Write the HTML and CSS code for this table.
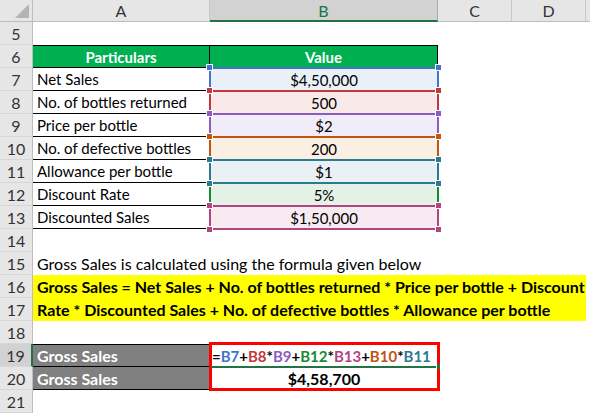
FILE: index.html
```html
<!DOCTYPE html>
<html>
<head>
<meta charset="utf-8">
<link rel="stylesheet" href="styles.css">
</head>
<body>
<div class="sheet">
  <div class="row head">
    <div class="corner"><span class="tri"></span></div>
    <div class="ch">A</div>
    <div class="ch sel">B</div>
    <div class="ch">C</div>
    <div class="ch">D</div>
    <div class="ch last"></div>
  </div>

  <div class="row"><div class="rh">5</div><div class="c"></div></div>

  <div class="row">
    <div class="rh">6</div>
    <div class="c th tha">Particulars</div>
    <div class="c th thb">Value</div>
  </div>

  <div class="row">
    <div class="rh">7</div>
    <div class="c la">Net Sales</div>
    <div class="c val r7"><span class="ref"><i class="h tl"></i><i class="h tr"></i><i class="h bl"></i><i class="h br"></i></span>$4,50,000</div>
  </div>
  <div class="row">
    <div class="rh">8</div>
    <div class="c la">No. of bottles returned</div>
    <div class="c val r8"><span class="ref"><i class="h tl"></i><i class="h tr"></i><i class="h bl"></i><i class="h br"></i></span>500</div>
  </div>
  <div class="row">
    <div class="rh">9</div>
    <div class="c la">Price per bottle</div>
    <div class="c val r9"><span class="ref"><i class="h tl"></i><i class="h tr"></i><i class="h bl"></i><i class="h br"></i></span>$2</div>
  </div>
  <div class="row">
    <div class="rh">10</div>
    <div class="c la">No. of defective bottles</div>
    <div class="c val r10"><span class="ref"><i class="h tl"></i><i class="h tr"></i><i class="h bl"></i><i class="h br"></i></span>200</div>
  </div>
  <div class="row">
    <div class="rh">11</div>
    <div class="c la">Allowance per bottle</div>
    <div class="c val r11"><span class="ref"><i class="h tl"></i><i class="h tr"></i><i class="h bl"></i><i class="h br"></i></span>$1</div>
  </div>
  <div class="row">
    <div class="rh">12</div>
    <div class="c la">Discount Rate</div>
    <div class="c val r12"><span class="ref"><i class="h tl"></i><i class="h tr"></i><i class="h bl"></i><i class="h br"></i></span>5%</div>
  </div>
  <div class="row">
    <div class="rh">13</div>
    <div class="c la">Discounted Sales</div>
    <div class="c val r13"><span class="ref"><i class="h tl"></i><i class="h tr"></i><i class="h bl"></i><i class="h br"></i></span>$1,50,000</div>
  </div>

  <div class="row"><div class="rh">14</div><div class="c"></div></div>

  <div class="row">
    <div class="rh">15</div>
    <div class="c big">Gross Sales is calculated using the formula given below</div>
  </div>
  <div class="row">
    <div class="rh">16</div>
    <div class="c hl">Gross Sales = Net Sales + No. of bottles returned * Price per bottle + Discount</div>
  </div>
  <div class="row">
    <div class="rh">17</div>
    <div class="c hl">Rate * Discounted Sales + No. of defective bottles * Allowance per bottle</div>
  </div>

  <div class="row"><div class="rh">18</div><div class="c"></div></div>

  <div class="row">
    <div class="rh rsel">19</div>
    <div class="c gs gs1">Gross Sales</div>
    <div class="c fx"><span class="redbox"></span><span class="active"><i class="ah"></i></span>=<b class="k7">B7</b>+<b class="k8">B8</b>*<b class="k9">B9</b>+<b class="k12">B12</b>*<b class="k13">B13</b>+<b class="k10">B10</b>*<b class="k11">B11</b></div>
  </div>
  <div class="row">
    <div class="rh">20</div>
    <div class="c gs gs2">Gross Sales</div>
    <div class="c res">$4,58,700</div>
  </div>

  <div class="row"><div class="rh">21</div><div class="c"></div></div>
</div>
</body>
</html>
```

FILE: styles.css
```css
html, body {
  margin: 0;
  padding: 0;
  background: #fff;
}
body {
  width: 590px;
  height: 413px;
  overflow: hidden;
  font-family: Lato, "Open Sans", sans-serif;
  font-size: 15px;
  color: #000;
}
.sheet {
  display: flex;
  flex-direction: column;
}
.row {
  display: grid;
  grid-template-columns: 33px 177px 228px 74px 74px 4px;
  height: 23px;
}
.row.head {
  height: 22px;
}
.corner {
  position: relative;
  background: #e6e6e6;
  border-right: 1px solid #bdbdbd;
  border-bottom: 1px solid #bdbdbd;
  box-sizing: border-box;
}
.tri {
  position: absolute;
  right: 3px;
  bottom: 3px;
  width: 0;
  height: 0;
  border-left: 14px solid transparent;
  border-bottom: 14px solid #b4b4b4;
}
.ch {
  background: #e6e6e6;
  border-right: 1px solid #c8c8c8;
  border-bottom: 1px solid #bdbdbd;
  box-sizing: border-box;
  display: flex;
  align-items: center;
  justify-content: center;
  color: #333;
  font-size: 16px;
}
.ch.sel {
  background: #d2d2d2;
  color: #217346;
  border-bottom: 2px solid #217346;
  border-right: 1px solid #a9a9a9;
}
.ch.last {
  border-right: none;
}
.rh {
  background: #e6e6e6;
  border-right: 1px solid #bdbdbd;
  border-bottom: 1px solid #d6d6d6;
  box-sizing: border-box;
  display: flex;
  align-items: center;
  justify-content: center;
  color: #333;
  font-size: 16px;
}
.rh.rsel {
  background: #d2d2d2;
  border-right: 2px solid #217346;
}
.c {
  box-sizing: border-box;
  display: flex;
  align-items: center;
  padding: 0 4px;
  white-space: nowrap;
  position: relative;
}
.big {
  font-size: 16px;
}
.th {
  background: #00b050;
  color: #fff;
  font-weight: bold;
  justify-content: center;
  border-top: 1px solid #000;
  border-bottom: 1px solid #000;
}
.tha {
  border-right: 1px solid #000;
}
.thb {
  border-right: 1px solid #000;
}
.la {
  border-bottom: 1px solid #000;
}
.val {
  justify-content: center;
}
.ref {
  position: absolute;
  left: -1px;
  right: -1px;
  top: -1px;
  bottom: -1px;
  border: 2px solid var(--k);
}
.h {
  position: absolute;
  width: 5px;
  height: 5px;
  background: var(--k);
  border: 1px solid #fff;
}
.h.tl { left: -5px; top: -5px; }
.h.tr { right: -5px; top: -5px; }
.h.bl { left: -5px; bottom: -5px; }
.h.br { right: -5px; bottom: -5px; }
.r7 { background: #eaf0f8; --k: #3f74c9; }
.r8 { background: #f9e9e9; --k: #c0393f; }
.r9 { background: #f1edf8; --k: #8a5cc0; }
.r10 { background: #fbeee3; --k: #c05510; }
.r11 { background: #e9f1f4; --k: #2b7a93; }
.r12 { background: #e4f1e6; --k: #168a34; }
.r13 { background: #f7eaf1; --k: #b24482; }
.r7 .ref { z-index: 2; }
.r8 .ref { z-index: 3; }
.r9 .ref { z-index: 4; }
.r10 .ref { z-index: 5; }
.r11 .ref { z-index: 6; }
.r12 .ref { z-index: 1; }
.r13 .ref { z-index: 2; }
.hl {
  grid-column: 2 / 6;
  background: #ffff00;
  font-weight: bold;
  font-size: 16px;
}
.gs {
  background: #808080;
  color: #fff;
  font-weight: bold;
  font-size: 16px;
  border-bottom: 1px solid #000;
}
.gs1 {
  border-top: 1px solid #000;
}
.fx {
  font-weight: bold;
  padding-left: 2px;
}
.fx b { font-weight: bold; }
.k7 { color: #3f74c9; }
.k8 { color: #c0393f; }
.k9 { color: #8a5cc0; }
.k12 { color: #168a34; }
.k13 { color: #b24482; }
.k10 { color: #c05510; }
.k11 { color: #2b7a93; }
.res {
  font-weight: bold;
  font-size: 16px;
  justify-content: center;
}
.redbox {
  position: absolute;
  left: -1px;
  top: -2px;
  width: 231px;
  height: 49px;
  box-sizing: border-box;
  border: 3px solid #ff0000;
  z-index: 3;
}
.active {
  position: absolute;
  left: 1px;
  right: 1px;
  bottom: -1px;
  height: 2px;
  background: #217346;
  z-index: 4;
}
.ah {
  position: absolute;
  right: -3px;
  top: -2px;
  width: 3px;
  height: 5px;
  background: #217346;
  border-left: 1px solid #fff;
}
```
